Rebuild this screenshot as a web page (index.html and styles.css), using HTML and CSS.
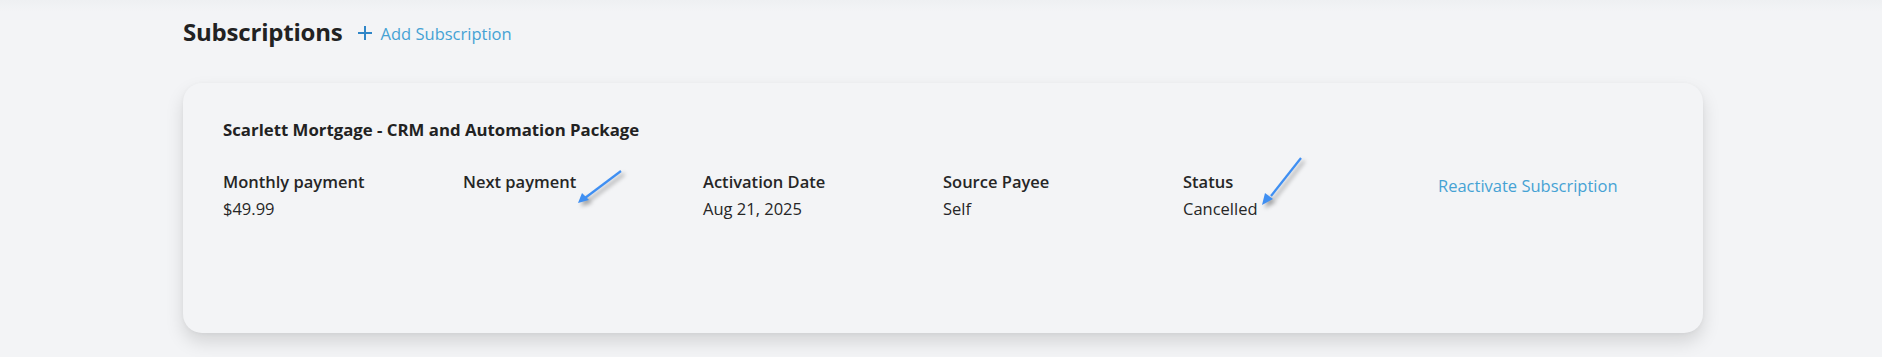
FILE: index.html
```html
<!DOCTYPE html>
<html>
<head>
  <title>Subscriptions</title>
  <meta charset=utf-8>
  <meta name="viewport" content="width=device-width, initial-scale=1" />
  <link rel="stylesheet" href="styles.css">
</head>
<body>

  <main class="page">
    <div class="head">
      <h2 class="head-title">Subscriptions</h2>
      <a class="add" href="#">
        <svg class="plus" width="16" height="16" viewBox="0 0 16 16"><path d="M8 1v14M1 8h14" stroke="currentColor" stroke-width="2" fill="none"/></svg>
        Add Subscription
      </a>
    </div>

    <section class="card">
      <h3 class="card-title">Scarlett Mortgage - CRM and Automation Package</h3>
      <div class="fields">
        <div class="field">
          <div class="label">Monthly payment</div>
          <div class="value">$49.99</div>
        </div>
        <div class="field">
          <div class="label">Next payment</div>
          <div class="value">&nbsp;</div>
        </div>
        <div class="field">
          <div class="label">Activation Date</div>
          <div class="value">Aug 21, 2025</div>
        </div>
        <div class="field">
          <div class="label">Source Payee</div>
          <div class="value">Self</div>
        </div>
        <div class="field">
          <div class="label">Status</div>
          <div class="value">Cancelled</div>
        </div>
        <a class="reactivate" href="#">Reactivate Subscription</a>
      </div>

      <!-- annotation arrows -->
      <svg class="arrow arrow-next" width="60" height="50" viewBox="0 0 60 50">
        <path d="M50 6 L14 33" stroke="#3f8ff2" stroke-width="2.2" fill="none"/>
        <path d="M7 38 L11 28 L18 35 Z" fill="#3f8ff2"/>
      </svg>
      <svg class="arrow arrow-status" width="60" height="60" viewBox="0 0 60 60">
        <path d="M50 5 L20 43" stroke="#3f8ff2" stroke-width="2.2" fill="none"/>
        <path d="M11 52 L14 40 L22 46 Z" fill="#3f8ff2"/>
      </svg>
    </section>
  </main>

</body>
</html>
```

FILE: styles.css
```css
* {
  box-sizing: border-box;
}
html {
  background: #f3f4f6;
  color: #262626;
  font-family: "Open Sans", "Noto Sans", sans-serif;
}
body {
  margin: 0;
  min-height: 357px;
  background: linear-gradient(180deg, #eef0f2, #f3f4f6 12px);
}
a {
  color: #45a2d4;
  text-decoration: none;
}

.page {
  width: 1520px;
  margin-left: 183px;
  padding-top: 12.5px;
}
.head {
  display: flex;
  align-items: center;
  gap: 14px;
  height: 38px;
}
.head-title {
  margin: 0;
  font-size: 24px;
  font-weight: 700;
  letter-spacing: -.2px;
  color: #222;
}
.add {
  display: flex;
  align-items: center;
  gap: 8px;
  font-size: 16.5px;
  padding-top: 3px;
}
.plus {
  color: #2f86c8;
}

.card {
  position: relative;
  margin-top: 32.5px;
  height: 250px;
  padding: 35px 40px;
  background: #f3f4f6;
  border-radius: 19px;
  box-shadow: 0 9px 18px rgba(0, 0, 0, .13), 0 1px 4px rgba(0, 0, 0, .04);
}
.card-title {
  margin: 0;
  font-size: 16.8px;
  font-weight: 700;
  color: #222;
}
.fields {
  display: grid;
  grid-template-columns: repeat(5, 240px) auto;
  margin-top: 27px;
}
.label {
  font-size: 16.5px;
  font-weight: 600;
  line-height: 27px;
}
.value {
  font-size: 16.5px;
  line-height: 27px;
}
.reactivate {
  padding-left: 15px;
  padding-top: 6px;
  font-size: 16.5px;
}

.arrow {
  position: absolute;
  filter: drop-shadow(3px 3px 2px rgba(0, 0, 0, .35));
}
.arrow-next {
  left: 388px;
  top: 82px;
}
.arrow-status {
  left: 1068px;
  top: 70px;
}
```
